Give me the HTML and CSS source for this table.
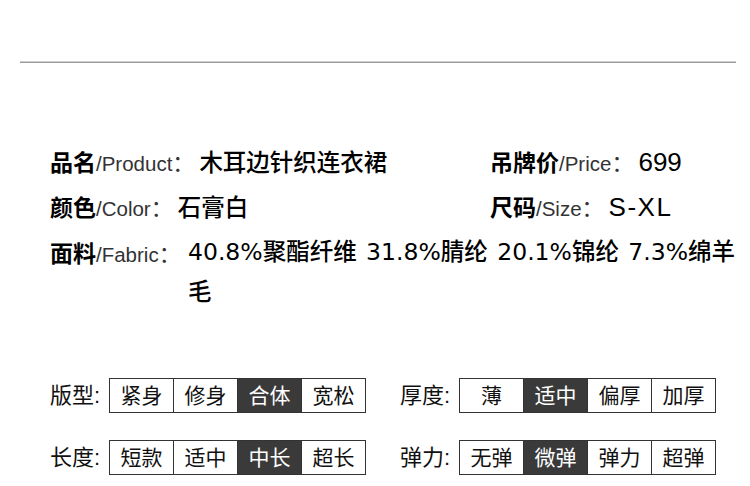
FILE: index.html
```html
<!DOCTYPE html>
<html lang="zh">
<head>
<meta charset="utf-8">
<link rel="stylesheet" href="styles.css">
</head>
<body>
<div class="rule"></div>
<section class="info">
  <div class="row two">
    <div class="cell"><b class="k">品名</b><span class="en">/Product</span><span class="colon">：</span><span class="v">木耳边针织连衣裙</span></div>
    <div class="cell"><b class="k">吊牌价</b><span class="en">/Price</span><span class="colon">：</span><span class="v num">699</span></div>
  </div>
  <div class="row two">
    <div class="cell"><b class="k">颜色</b><span class="en">/Color</span><span class="colon">：</span><span class="v">石膏白</span></div>
    <div class="cell"><b class="k">尺码</b><span class="en">/Size</span><span class="colon">：</span><span class="v num size">S-XL</span></div>
  </div>
  <div class="row fabric">
    <div class="flabel"><b class="k">面料</b><span class="en">/Fabric</span><span class="colon">：</span></div>
    <div class="fvalue">40.8%聚酯纤维 31.8%腈纶 20.1%锦纶 7.3%绵羊毛</div>
  </div>
</section>
<section class="opts">
  <div class="opt">
    <span class="olabel">版型:</span>
    <div class="group"><span class="btn">紧身</span><span class="btn">修身</span><span class="btn on">合体</span><span class="btn">宽松</span></div>
  </div>
  <div class="opt">
    <span class="olabel">厚度:</span>
    <div class="group"><span class="btn">薄</span><span class="btn on">适中</span><span class="btn">偏厚</span><span class="btn">加厚</span></div>
  </div>
  <div class="opt">
    <span class="olabel">长度:</span>
    <div class="group"><span class="btn">短款</span><span class="btn">适中</span><span class="btn on">中长</span><span class="btn">超长</span></div>
  </div>
  <div class="opt">
    <span class="olabel">弹力:</span>
    <div class="group"><span class="btn">无弹</span><span class="btn on">微弹</span><span class="btn">弹力</span><span class="btn">超弹</span></div>
  </div>
</section>
</body>
</html>
```
FILE: styles.css
```css
* { box-sizing: border-box; }
body {
  margin: 0;
  background: #fff;
  color: #111;
  font-family: "Liberation Sans", "Noto Sans CJK SC", sans-serif;
}
.rule {
  margin: 61px 14px 0 20px;
  height: 2px;
  border-top: 1px solid #cfcfcf;
  border-bottom: 1px solid #9a9a9a;
}
.info {
  padding-left: 50px;
  margin-top: 76px;
}
.row.two {
  display: grid;
  grid-template-columns: 440px 1fr;
  height: 45px;
  line-height: 45px;
  white-space: nowrap;
}
.k {
  font-size: 23px;
  font-weight: bold;
  color: #000;
}
.en {
  font-size: 20.5px;
  color: #333;
}
.colon {
  font-family: "Noto Sans CJK SC", sans-serif;
  font-size: 22px;
  color: #333;
  margin-right: 5px;
}
.v {
  font-size: 23.5px;
  font-weight: 500;
  color: #000;
}
.v.num {
  font-size: 26px;
  font-weight: normal;
}
.v.size {
  letter-spacing: 1.5px;
}
.fabric {
  display: flex;
  margin-top: 3px;
  line-height: 40px;
}
.flabel {
  width: 138px;
  flex: none;
  white-space: nowrap;
}
.fvalue {
  width: 560px;
  font-family: "DejaVu Sans", "Noto Sans CJK SC", sans-serif;
  font-size: 23.5px;
  font-weight: 500;
  word-spacing: 2px;
  color: #000;
}
.opts {
  margin-top: 66px;
  padding-left: 50px;
  display: grid;
  grid-template-columns: 350px 350px;
  row-gap: 27px;
}
.opt {
  display: flex;
  align-items: center;
}
.olabel {
  width: 59px;
  font-size: 22px;
  line-height: 1;
  color: #111;
}
.group {
  display: flex;
  border: 1px solid #333;
}
.btn {
  width: 64px;
  height: 33px;
  line-height: 33px;
  text-align: center;
  font-size: 21px;
  color: #111;
  border-left: 1px solid #333;
}
.btn:first-child {
  width: 63px;
  border-left: 0;
}
.btn.on {
  background: #3a3a3a;
  color: #fff;
}
```
